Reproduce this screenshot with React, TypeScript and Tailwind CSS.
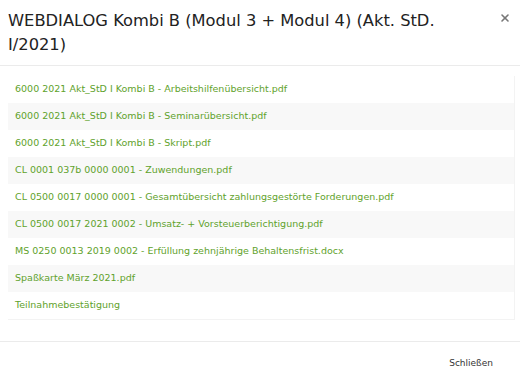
import { X } from "lucide-react";

const files = [
  "6000 2021 Akt_StD I Kombi B - Arbeitshilfenübersicht.pdf",
  "6000 2021 Akt_StD I Kombi B - Seminarübersicht.pdf",
  "6000 2021 Akt_StD I Kombi B - Skript.pdf",
  "CL 0001 037b 0000 0001 - Zuwendungen.pdf",
  "CL 0500 0017 0000 0001 - Gesamtübersicht zahlungsgestörte Forderungen.pdf",
  "CL 0500 0017 2021 0002 - Umsatz- + Vorsteuerberichtigung.pdf",
  "MS 0250 0013 2019 0002 - Erfüllung zehnjährige Behaltensfrist.docx",
  "Spaßkarte März 2021.pdf",
  "Teilnahmebestätigung",
];

export default function App() {
  return (
    <div className="w-[520px] h-[378px] bg-white overflow-hidden font-['DejaVu_Sans',Verdana,sans-serif]">
      {/* Header */}
      <div className="h-[66px] border-b border-[#ebebeb] flex items-start justify-between pl-2 pr-2 pt-[9px]">
        <h2 className="text-[16.3px] leading-[24px] text-[#222] w-[440px]">
          WEBDIALOG Kombi B (Modul 3 + Modul 4) (Akt. StD. I/2021)
        </h2>
        <button className="mt-[3px] mr-[1px] text-[#777]">
          <X className="w-[12px] h-[12px]" strokeWidth={3.2} />
        </button>
      </div>

      {/* Body */}
      <div className="h-[275px] pt-[10px] pl-2 pr-[5px]">
        <ul className="border-r border-b border-[#f3f3f3]">
          {files.map((f, i) => (
            <li
              key={f}
              className={
                "h-[27px] flex items-center pl-[7px] text-[9.5px] text-[#5fa22c] " +
                (i % 2 === 1 ? "bg-[#f8f8f8]" : "bg-white")
              }
            >
              <a href="#">{f}</a>
            </li>
          ))}
        </ul>
      </div>

      {/* Footer */}
      <div className="border-t border-[#ebebeb] h-[37px] flex items-start justify-end pr-[27px] pt-[16px]">
        <button className="text-[9px] leading-[11px] text-[#333]">Schließen</button>
      </div>
    </div>
  );
}
